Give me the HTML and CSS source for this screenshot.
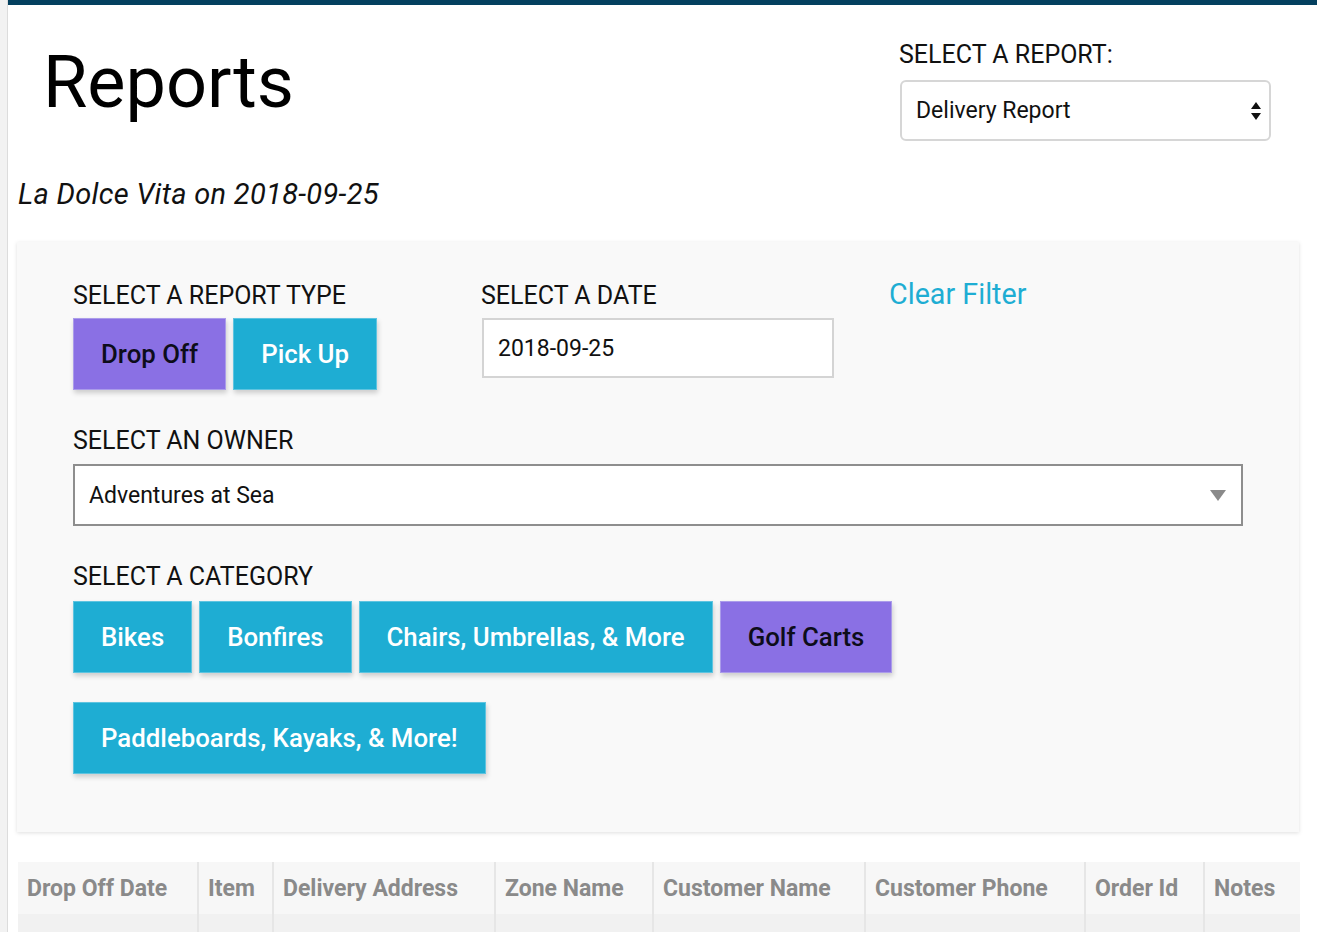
FILE: index.html
```html
<!DOCTYPE html>
<html lang="en">
<head>
<meta charset="utf-8">
<title>Reports</title>
<link rel="stylesheet" href="styles.css">
</head>
<body>
<div class="app">
  <div class="rail"></div>
  <main class="main">
    <div class="topbar"></div>
    <header class="page-head">
      <h1 class="title">Reports</h1>
      <div class="report-picker">
        <div class="picker-label">SELECT A REPORT:</div>
        <div class="picker-select">
          <span>Delivery Report</span>
          <svg class="updown" width="10" height="20" viewBox="0 0 10 20"><path d="M5 1 L10 8 L0 8 Z M0 12 L10 12 L5 19 Z" fill="#111"/></svg>
        </div>
      </div>
    </header>
    <p class="subtitle">La Dolce Vita on 2018-09-25</p>

    <section class="filters">
      <div class="filter-grid">
        <div class="field">
          <div class="field-label">SELECT A REPORT TYPE</div>
          <div class="btn-row">
            <button class="btn btn-active">Drop Off</button>
            <button class="btn">Pick Up</button>
          </div>
        </div>
        <div class="field">
          <div class="field-label">SELECT A DATE</div>
          <div class="date-input">2018-09-25</div>
        </div>
        <div class="field">
          <a class="clear-link">Clear Filter</a>
        </div>
      </div>

      <div class="field field-wide field-owner">
        <div class="field-label">SELECT AN OWNER</div>
        <div class="owner-select">
          <span>Adventures at Sea</span>
          <svg width="16" height="11" viewBox="0 0 16 11"><path d="M0 0 H16 L8 11 Z" fill="#8a8a8a"/></svg>
        </div>
      </div>

      <div class="field field-wide field-category">
        <div class="field-label">SELECT A CATEGORY</div>
        <div class="btn-row btn-wrap">
          <button class="btn">Bikes</button>
          <button class="btn">Bonfires</button>
          <button class="btn">Chairs, Umbrellas, &amp; More</button>
          <button class="btn btn-active">Golf Carts</button>
          <button class="btn">Paddleboards, Kayaks, &amp; More!</button>
        </div>
      </div>
    </section>

    <table class="report-table">
      <thead>
        <tr>
          <th class="c1">Drop Off Date</th>
          <th class="c2">Item</th>
          <th class="c3">Delivery Address</th>
          <th class="c4">Zone Name</th>
          <th class="c5">Customer Name</th>
          <th class="c6">Customer Phone</th>
          <th class="c7">Order Id</th>
          <th class="c8">Notes</th>
        </tr>
      </thead>
      <tbody>
        <tr>
          <td></td><td></td><td></td><td></td><td></td><td></td><td></td><td></td>
        </tr>
      </tbody>
    </table>
  </main>
</div>
</body>
</html>
```

FILE: styles.css
```css
* { box-sizing: border-box; }

html, body {
  margin: 0;
  padding: 0;
  background: #ffffff;
  font-family: Roboto, "Liberation Sans", Arial, sans-serif;
  color: #111;
}

.app {
  display: flex;
  min-height: 932px;
}

.rail {
  width: 8px;
  flex: 0 0 8px;
  background: #f2f2f2;
  border-right: 1px solid #dcdcdc;
}

.main {
  width: 1309px;
  flex: 0 0 1309px;
}

.topbar {
  height: 5px;
  background: #04405f;
}

.page-head {
  display: flex;
  justify-content: space-between;
  align-items: flex-start;
  padding: 34px 46px 0 35px;
}

.title {
  margin: 1px 0 0 0;
  font-size: 72px;
  line-height: 86px;
  font-weight: 400;
  color: #000;
}

.report-picker {
  width: 372px;
  margin-top: 2px;
}

.picker-label {
  font-size: 25px;
  line-height: 28px;
  margin-bottom: 11px;
  color: #111;
}

.picker-select {
  margin-left: 1px;
  height: 61px;
  border: 2px solid #d6d6d6;
  border-radius: 6px;
  background: #fff;
  display: flex;
  align-items: center;
  justify-content: space-between;
  padding: 0 8px 0 14px;
  font-size: 23px;
}

.subtitle {
  margin: 37px 0 0 10px;
  font-size: 29px;
  line-height: 32px;
  letter-spacing: 0.3px;
  font-style: italic;
  color: #111;
}

.filters {
  margin: 32px 18px 0 9px;
  background: #f9f9f9;
  box-shadow: 0 1px 4px rgba(0, 0, 0, 0.13);
  padding: 40px 56px 58px 56px;
}

.filter-grid {
  display: grid;
  grid-template-columns: 390px 390px 1fr;
  column-gap: 18px;
}

.field-label {
  font-size: 25px;
  line-height: 28px;
  margin-bottom: 8px;
  color: #111;
}

.field-wide {
  margin-top: 37px;
}

.field-owner .field-label {
  margin-bottom: 9px;
}

.field-category .field-label {
  margin-bottom: 10px;
}

.btn-row {
  display: flex;
  gap: 7px;
}

.btn-wrap {
  flex-wrap: wrap;
  row-gap: 29px;
}

.btn {
  height: 72px;
  padding: 0 27px;
  border: 1px solid #5ec4e0;
  background: #1eadd3;
  color: #fff;
  font-family: Roboto, "Liberation Sans", Arial, sans-serif;
  font-size: 25.8px;
  font-weight: 500;
  box-shadow: 1px 3px 5px rgba(0, 0, 0, 0.18);
  cursor: pointer;
}

.btn-active {
  background: #8a70e4;
  border-color: #ab9cea;
  color: #0d0d1a;
}

.date-input {
  margin-top: 1px;
  margin-left: 1px;
  width: 352px;
  height: 60px;
  border: 2px solid #d4d4d4;
  background: #fff;
  display: flex;
  align-items: center;
  padding-left: 14px;
  font-size: 23px;
}

.clear-link {
  display: block;
  margin-top: -5px;
  font-size: 28.7px;
  line-height: 34px;
  color: #1eadd3;
  cursor: pointer;
}

.owner-select {
  height: 62px;
  border: 2px solid #8e8e8e;
  background: #fff;
  display: flex;
  align-items: center;
  justify-content: space-between;
  padding: 0 15px 0 14px;
  font-size: 23px;
}

.report-table {
  margin: 30px 0 0 10px;
  width: 1282px;
  border-collapse: collapse;
  table-layout: fixed;
}

.report-table th {
  background: #f7f7f7;
  color: #8a8a8a;
  font-size: 23px;
  font-weight: 700;
  text-align: left;
  line-height: 26px;
  padding: 14px 4px 12px 9px;
  border-left: 2px solid #e6e6e6;
  white-space: nowrap;
  overflow: hidden;
}

.report-table th:first-child,
.report-table td:first-child {
  border-left: none;
}

.report-table td {
  background: #f1f1f1;
  height: 40px;
  border-left: 2px solid #e6e6e6;
}

.c1 { width: 180px; }
.c2 { width: 75px; }
.c3 { width: 222px; }
.c4 { width: 158px; }
.c5 { width: 212px; }
.c6 { width: 220px; }
.c7 { width: 119px; }
.c8 { width: 96px; }
```
